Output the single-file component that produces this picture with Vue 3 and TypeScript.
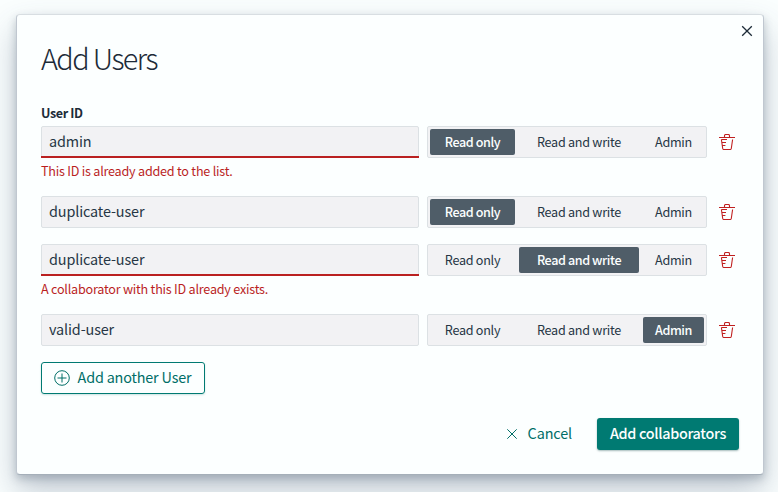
<script setup lang="ts">
import { ref } from 'vue'

type Role = 'Read only' | 'Read and write' | 'Admin'

interface UserRow {
  id: string
  role: Role
  error?: string
}

const roles: Role[] = ['Read only', 'Read and write', 'Admin']

const users = ref<UserRow[]>([
  { id: 'admin', role: 'Read only', error: 'This ID is already added to the list.' },
  { id: 'duplicate-user', role: 'Read only' },
  { id: 'duplicate-user', role: 'Read and write', error: 'A collaborator with this ID already exists.' },
  { id: 'valid-user', role: 'Admin' },
])

function addUser() {
  users.value.push({ id: '', role: 'Read only' })
}

function removeUser(index: number) {
  users.value.splice(index, 1)
}
</script>

<template>
  <div class="page">
    <section class="modal" role="dialog">
      <button class="close">
        <svg width="16" height="16" viewBox="0 0 16 16"><path d="M3.2 3.2l9.6 9.6M12.8 3.2l-9.6 9.6" /></svg>
      </button>
      <h1 class="title">Add Users</h1>
      <div class="label">User ID</div>
      <div class="rows">
        <div v-for="(user, i) in users" :key="i" class="row">
          <div class="field">
            <div class="control" :class="{ invalid: user.error }">
              <input v-model="user.id" class="input" type="text" spellcheck="false" />
            </div>
            <div v-if="user.error" class="error">{{ user.error }}</div>
          </div>
          <div class="toggle">
            <button
              v-for="role in roles"
              :key="role"
              class="option"
              :class="{ selected: user.role === role }"
              @click="user.role = role"
            ><span>{{ role }}</span></button>
          </div>
          <button class="trash" @click="removeUser(i)">
            <svg width="16" height="16" viewBox="0 0 16 16">
              <path d="M0 3.5h16M5.5 3.5V1.7q0-1.2 1.2-1.2h2.6q1.2 0 1.2 1.2v1.8M2.4 5.5l1.3 9q.2 1 1.2 1h6.2q1 0 1.2-1l1.3-9M2.4 5.5h5.6M3 8.5h4M3.4 11.5h3" />
            </svg>
          </button>
        </div>
      </div>
      <button class="add" @click="addUser">
        <svg width="16" height="16" viewBox="0 0 16 16">
          <circle cx="8" cy="8" r="7.3" />
          <path d="M8 3.5v9M3.5 8h9" />
        </svg>
        <span>Add another User</span>
      </button>
      <footer class="footer">
        <button class="cancel">
          <svg width="12" height="12" viewBox="0 0 12 12"><path d="M1.3 1.3l9.4 9.4M10.7 1.3l-9.4 9.4" /></svg>
          <span>Cancel</span>
        </button>
        <button class="submit"><span>Add collaborators</span></button>
      </footer>
    </section>
  </div>
</template>

<style>
html,
body {
  margin: 0;
  overflow: hidden;
}
</style>

<style scoped>
.page {
  box-sizing: border-box;
  width: 778px;
  height: 492px;
  padding: 14px 14px 17px 16px;
  overflow: hidden;
  background: #fafefe;
  color: #1d2b38;
  font-family: "Noto Sans CJK SC", "Noto Sans", sans-serif;
}

.modal {
  position: relative;
  box-sizing: border-box;
  height: 461px;
  padding: 25px 24px 23px;
  border: 1px solid;
  border-color: #d8dee2 #c0c7d0 #a5afb9 #c0c7d0;
  border-radius: 4px;
  background: #fcffff;
  box-shadow: 0 16px 32px rgba(60, 75, 105, 0.3), 0 4px 9px rgba(50, 70, 85, 0.26);
}

button {
  display: flex;
  align-items: center;
  justify-content: center;
  box-sizing: border-box;
  margin: 0;
  padding: 0;
  border: 0;
  background: transparent;
  color: inherit;
  font-family: inherit;
  white-space: nowrap;
}

svg {
  flex: none;
  fill: none;
  stroke: currentColor;
  stroke-width: 1;
}

.close {
  position: absolute;
  top: 8px;
  right: 8px;
  width: 16px;
  height: 16px;
}

.close svg {
  stroke-width: 1.3;
}

.title {
  height: 36px;
  margin: 0;
  font-size: 28.8px;
  font-weight: 300;
  line-height: 36px;
  letter-spacing: -1.6px;
}

.label {
  height: 16px;
  margin-top: 29px;
  font-size: 12.6px;
  font-weight: 700;
  line-height: 16px;
  letter-spacing: -0.4px;
}

.rows {
  display: flex;
  flex-direction: column;
  gap: 16px;
  margin-top: 5px;
}

.row {
  display: flex;
  align-items: flex-start;
}

.field {
  width: 378px;
}

.control {
  position: relative;
  box-sizing: border-box;
  height: 32px;
  border: 1px solid #dce1e4;
  border-radius: 2px;
  background: #f2f2f4;
}

.control.invalid::after {
  content: "";
  position: absolute;
  right: -1px;
  bottom: -1px;
  left: -1px;
  height: 2px;
  background: #ba2020;
}

.input {
  display: block;
  box-sizing: border-box;
  width: 100%;
  height: 30px;
  margin: 0;
  padding: 0 7px 3px;
  border: 0;
  outline: 0;
  background: transparent;
  color: #263645;
  font-family: inherit;
  font-size: 14.4px;
  letter-spacing: -0.12px;
}

.error {
  height: 18px;
  margin-top: 4px;
  color: #ba1f1f;
  font-size: 12.6px;
  line-height: 18px;
  letter-spacing: -0.22px;
}

.toggle {
  display: grid;
  grid-template-columns: 85px 120px 61px;
  gap: 4px;
  box-sizing: border-box;
  width: 280px;
  height: 32px;
  margin-left: 8px;
  padding: 2px;
  border: 1px solid #dce1e4;
  border-radius: 2px;
  background: #f2f2f4;
}

.option {
  height: 26px;
  border-radius: 2px;
  color: #263645;
  font-size: 12.6px;
  line-height: 26px;
  letter-spacing: -0.27px;
}

.option.selected {
  background: #4f5d68;
  color: #fcffff;
  font-weight: 500;
  letter-spacing: -0.42px;
}

.trash {
  width: 16px;
  height: 32px;
  margin-left: 12px;
  color: #c02020;
}

.trash svg {
  stroke-width: 1.1;
}

.add {
  gap: 8px;
  width: 164px;
  height: 32px;
  padding-right: 1px;
  margin-top: 16px;
  border: 1px solid #007a72;
  border-radius: 3px;
  color: #006e67;
  font-size: 14.4px;
  line-height: 28px;
  letter-spacing: -0.18px;
  box-shadow: 0 1px 2px rgba(0, 110, 103, 0.2);
}

.footer {
  display: flex;
  justify-content: flex-end;
  gap: 25px;
  margin-top: 24px;
}

.cancel {
  gap: 10px;
  height: 32px;
  color: #006e67;
  font-size: 14.4px;
  line-height: 30px;
  letter-spacing: -0.12px;
}

.add span,
.cancel span,
.submit span {
  padding-bottom: 2px;
}

.submit {
  width: 142px;
  height: 32px;
  border-radius: 3px;
  background: #007a72;
  color: #fcffff;
  font-size: 14.4px;
  font-weight: 500;
  line-height: 30px;
  letter-spacing: -0.32px;
  box-shadow: 0 1px 2px rgba(0, 60, 60, 0.35);
}
</style>
